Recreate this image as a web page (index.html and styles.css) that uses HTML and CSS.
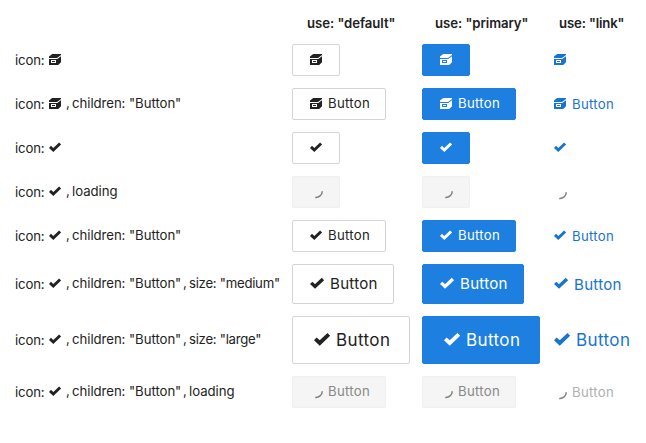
FILE: index.html
```
<!DOCTYPE html>
<html lang="en">
<head>
<meta charset="utf-8">
<title>Button icons</title>
<link rel="stylesheet" href="styles.css">
</head>
<body>
<svg class="defs" aria-hidden="true">
  <symbol id="box" viewBox="0 0 12 12"><path fill-rule="evenodd" d="M0 5h8.3L12 2.2v6L9.2 11H0zM2 6v3h5V6zM3 7h3v1H3zM0 4V2.6L3.2 0H12v1L8 4z"/></symbol>
  <symbol id="ok" viewBox="0 0 12 12"><path fill="none" stroke="currentColor" stroke-width="2.9" d="M1 5.9L4.3 9L11.1 2.5"/></symbol>
  <symbol id="spin" viewBox="0 0 12 12"><path fill="none" stroke="#808080" stroke-width="1.5" d="M12.3 5.2A6.5 6.5 0 0 1 5.2 11.4"/></symbol>
</svg>
<main class="table">
  <div class="row head"><span></span><b class="h-default">use: "default"</b><b class="h-primary">use: "primary"</b><b class="h-link">use: "link"</b></div>
  <div class="row">
    <div class="props"><i>icon:</i><svg class="box"><use href="#box"/></svg></div>
    <div><button class="btn"><svg class="box"><use href="#box"/></svg></button></div>
    <div><button class="btn primary"><svg class="box"><use href="#box"/></svg></button></div>
    <a class="link"><svg class="box"><use href="#box"/></svg></a>
  </div>
  <div class="row">
    <div class="props"><i>icon:</i><svg class="box"><use href="#box"/></svg><em>,</em><span>children: "Button"</span></div>
    <div><button class="btn"><svg class="box"><use href="#box"/></svg><span>Button</span></button></div>
    <div><button class="btn primary"><svg class="box"><use href="#box"/></svg><span>Button</span></button></div>
    <a class="link"><svg class="box"><use href="#box"/></svg><span>Button</span></a>
  </div>
  <div class="row">
    <div class="props"><i>icon:</i><svg class="ok"><use href="#ok"/></svg></div>
    <div><button class="btn"><svg class="ok"><use href="#ok"/></svg></button></div>
    <div><button class="btn primary"><svg class="ok"><use href="#ok"/></svg></button></div>
    <a class="link"><svg class="ok"><use href="#ok"/></svg></a>
  </div>
  <div class="row">
    <div class="props"><i>icon:</i><svg class="ok"><use href="#ok"/></svg><em>,</em><span>loading</span></div>
    <div><button class="btn loading"><svg class="spin"><use href="#spin"/></svg></button></div>
    <div><button class="btn loading"><svg class="spin"><use href="#spin"/></svg></button></div>
    <a class="link loading"><svg class="spin"><use href="#spin"/></svg></a>
  </div>
  <div class="row">
    <div class="props"><i>icon:</i><svg class="ok"><use href="#ok"/></svg><em>,</em><span>children: "Button"</span></div>
    <div><button class="btn"><svg class="ok"><use href="#ok"/></svg><span>Button</span></button></div>
    <div><button class="btn primary"><svg class="ok"><use href="#ok"/></svg><span>Button</span></button></div>
    <a class="link"><svg class="ok"><use href="#ok"/></svg><span>Button</span></a>
  </div>
  <div class="row medium">
    <div class="props"><i>icon:</i><svg class="ok"><use href="#ok"/></svg><em>,</em><span>children: "Button"</span><em class="second">,</em><span class="size">size: "medium"</span></div>
    <div><button class="btn"><svg class="ok"><use href="#ok"/></svg><span>Button</span></button></div>
    <div><button class="btn primary"><svg class="ok"><use href="#ok"/></svg><span>Button</span></button></div>
    <a class="link"><svg class="ok"><use href="#ok"/></svg><span>Button</span></a>
  </div>
  <div class="row large">
    <div class="props"><i>icon:</i><svg class="ok"><use href="#ok"/></svg><em>,</em><span>children: "Button"</span><em class="second">,</em><span class="size">size: "large"</span></div>
    <div><button class="btn"><svg class="ok"><use href="#ok"/></svg><span>Button</span></button></div>
    <div><button class="btn primary"><svg class="ok"><use href="#ok"/></svg><span>Button</span></button></div>
    <a class="link"><svg class="ok"><use href="#ok"/></svg><span>Button</span></a>
  </div>
  <div class="row">
    <div class="props"><i>icon:</i><svg class="ok"><use href="#ok"/></svg><em>,</em><span>children: "Button"</span><em class="second">,</em><span>loading</span></div>
    <div><button class="btn loading"><svg class="spin"><use href="#spin"/></svg><span>Button</span></button></div>
    <div><button class="btn loading"><svg class="spin"><use href="#spin"/></svg><span>Button</span></button></div>
    <a class="link loading"><svg class="spin"><use href="#spin"/></svg><span>Button</span></a>
  </div>
</main>
</body>
</html>
```
FILE: styles.css
```
* { box-sizing: border-box; }
body { margin: 0; background: #fff; color: #222; font: 13.2px/20px Inter, sans-serif; }
svg { display: block; flex: none; width: 12px; height: 12px; fill: currentColor; overflow: visible; }
symbol { overflow: visible; }
i, em { font-style: normal; }
.defs { display: none; }

.table { display: grid; gap: 12px; padding: 14px 0 0 15px; }
.row { display: grid; grid-template-columns: 277px 130px 132px 92px; align-items: center; height: 32px; white-space: nowrap; }
.head { height: 18px; line-height: 18px; }
.head b { font-weight: 600; justify-self: start; letter-spacing: -0.05px; }
.head .h-link { letter-spacing: -0.15px; }
.h-default { margin-left: 15px; }
.h-primary { margin-left: 13px; }
.h-link { margin-left: 5px; }
.medium { height: 40px; }
.large { height: 48px; }

.ok { margin-top: -2px; }
.props { display: flex; align-items: center; height: 20px; }
.props i { width: 34px; letter-spacing: -0.15px; }
.props em, .props span { margin-top: -2px; }
.props span { letter-spacing: -0.05px; }
.props em { width: 6px; margin-left: 5px; }
.props .second { margin-left: 2px; }
.props span:nth-of-type(1) { width: 109px; }
.props .size { letter-spacing: -0.27px; }

.btn { display: flex; align-items: center; width: 48px; height: 32px; padding: 0 0 0 17px; border: 1px solid #d4d4d4; border-radius: 2px; background: #fff; color: #222; font: inherit; }
.btn:has(span) { width: 94px; }
.btn span, .link span { letter-spacing: 0.28px; }
.btn span { margin: -2px 0 0 6px; }
.primary { border-color: #1d7fe0; background: #1d7fe0; color: #fff; }
.link { display: flex; align-items: center; color: #1874d1; }
.link span { margin-left: 6px; }
.link .spin { margin-top: 2px; }

.medium .btn { width: 102px; height: 40px; }
.medium .btn svg, .medium .link svg { width: 14px; height: 14px; }
.medium .btn span, .medium .link span { font-size: 15.1px; }
.large .btn { width: 118px; height: 48px; padding-left: 21px; }
.large .btn svg, .large .link svg { width: 16px; height: 16px; }
.large .btn span, .large .link span { font-size: 17px; letter-spacing: 0.4px; }
.medium .btn span, .large .btn span { margin-top: 0; }
.medium .link span { margin-top: 2px; }

.btn.loading { border-color: #f0f0f0; background: #f5f5f5; color: #888; }
.link.loading { color: #b0b0b0; }
```
